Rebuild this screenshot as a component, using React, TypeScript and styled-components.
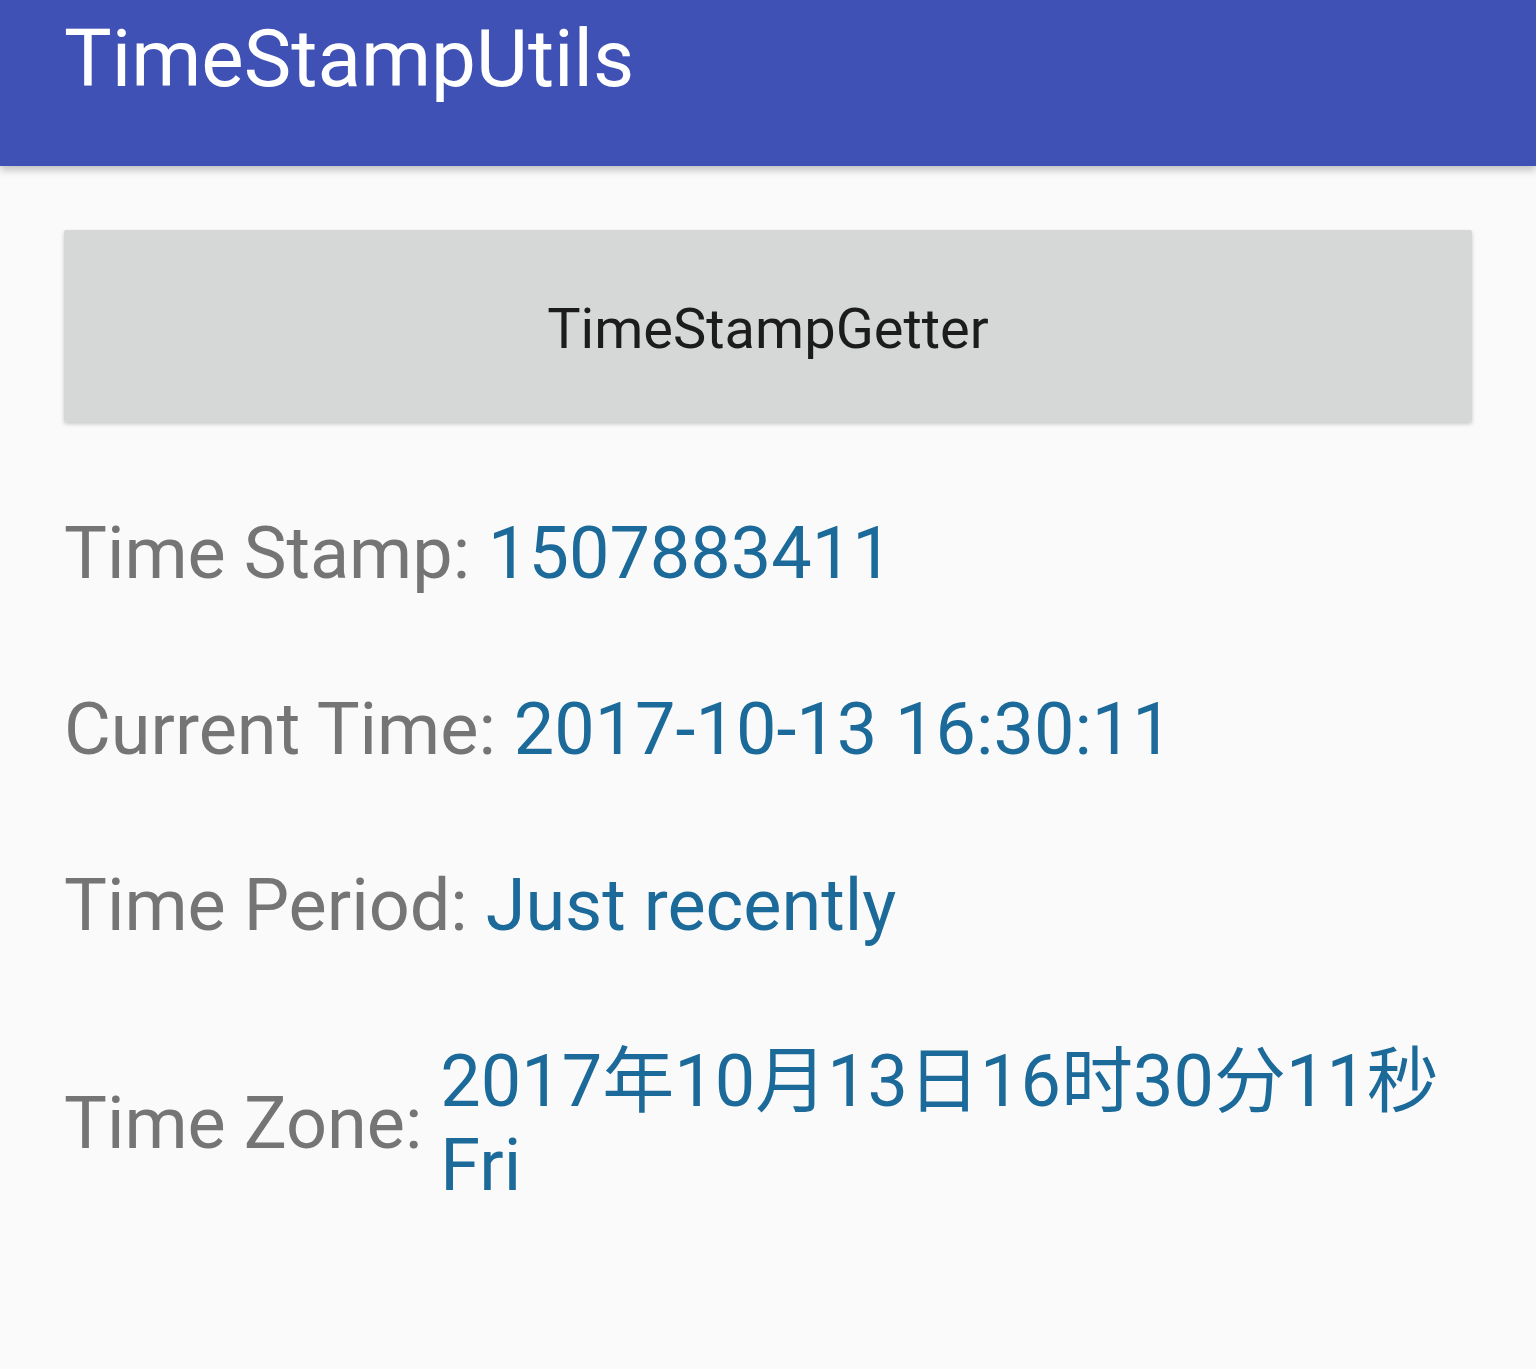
import React from 'react';
import styled, { createGlobalStyle } from 'styled-components';

const GlobalStyle = createGlobalStyle`
  html, body {
    margin: 0;
    padding: 0;
    background: #fafafa;
  }
  body {
    font-family: Roboto, "Noto Sans CJK SC", sans-serif;
  }
`;

const Screen = styled.div`
  width: 1536px;
  min-height: 1369px;
  background: #fafafa;
  display: flex;
  flex-direction: column;
`;

const Toolbar = styled.header`
  height: 166px;
  box-sizing: border-box;
  background: #3f51b5;
  padding: 12px 64px 0;
  box-shadow: 0 4px 8px rgba(0, 0, 0, 0.24);
  position: relative;
  z-index: 1;
`;

const Title = styled.h1`
  margin: 0;
  font-family: Roboto, sans-serif;
  font-weight: 400;
  font-size: 80px;
  line-height: normal;
  color: #ffffff;
`;

const Content = styled.main`
  display: flex;
  flex-direction: column;
  padding: 64px 64px 0;
`;

const GetterButton = styled.button`
  height: 192px;
  width: 100%;
  border: none;
  border-radius: 2px;
  background: #d6d7d7;
  box-shadow: 0 2px 4px rgba(0, 0, 0, 0.2);
  display: flex;
  align-items: center;
  justify-content: center;
  padding: 6px 0 0;
  font-family: Roboto, sans-serif;
  font-size: 56px;
  color: rgba(0, 0, 0, 0.87);
  cursor: pointer;
`;

const InfoList = styled.div`
  display: flex;
  flex-direction: column;
  gap: 92px;
  margin-top: 90px;
`;

const InfoRow = styled.div`
  display: flex;
  align-items: center;
  font-size: 72px;
  line-height: 84px;
`;

const Label = styled.span`
  color: #757575;
  white-space: pre;
  flex-shrink: 0;
`;

const Value = styled.span`
  color: #1b6a99;
  font-family: Roboto, "Noto Sans CJK SC", sans-serif;
`;

const rows = [
  { label: 'Time Stamp: ', value: '1507883411' },
  { label: 'Current Time: ', value: '2017-10-13 16:30:11' },
  { label: 'Time Period: ', value: 'Just recently' },
  { label: 'Time Zone: ', value: '2017年10月13日16时30分11秒 Fri' },
];

const App: React.FC = () => {
  return (
    <Screen>
      <GlobalStyle />
      <Toolbar>
        <Title>TimeStampUtils</Title>
      </Toolbar>
      <Content>
        <GetterButton>TimeStampGetter</GetterButton>
        <InfoList>
          {rows.map((row) => (
            <InfoRow key={row.label}>
              <Label>{row.label}</Label>
              <Value>{row.value}</Value>
            </InfoRow>
          ))}
        </InfoList>
      </Content>
    </Screen>
  );
};

export default App;
